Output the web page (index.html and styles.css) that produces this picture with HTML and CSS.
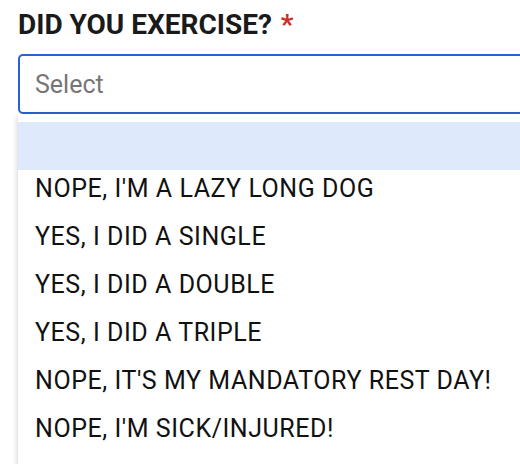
FILE: index.html
```html
<!DOCTYPE html>
<html>
<head>
<meta charset="utf-8">
<link rel="stylesheet" href="styles.css">
</head>
<body>
<div class="field">
  <label class="label">DID YOU EXERCISE? <span class="req">*</span></label>
  <div class="select">
    <div class="input">Select</div>
    <ul class="menu">
      <li class="opt active"></li>
      <li class="opt">NOPE, I'M A LAZY LONG DOG</li>
      <li class="opt">YES, I DID A SINGLE</li>
      <li class="opt">YES, I DID A DOUBLE</li>
      <li class="opt">YES, I DID A TRIPLE</li>
      <li class="opt">NOPE, IT'S MY MANDATORY REST DAY!</li>
      <li class="opt">NOPE, I'M SICK/INJURED!</li>
      <li class="opt"></li>
    </ul>
  </div>
</div>
</body>
</html>
```
FILE: styles.css
```css
html, body {
  margin: 0;
  padding: 0;
  background: #fff;
  overflow: hidden;
  width: 520px;
  height: 464px;
}
body {
  font-family: Roboto, "Liberation Sans", sans-serif;
  color: #111;
}
.field {
  padding: 8px 0 0 18px;
}
.label {
  display: block;
  font-weight: 700;
  font-size: 28px;
  line-height: 34px;
  color: #1a1a1a;
  margin-bottom: 12px;
}
.req {
  color: #c8302c;
  margin-left: 2px;
}
.select {
  width: 540px;
}
.input {
  box-sizing: border-box;
  height: 60px;
  border: 2px solid #2a61d1;
  border-radius: 5px;
  padding: 2px 15px 0;
  font-size: 25px;
  line-height: 54px;
  color: #767676;
}
.menu {
  list-style: none;
  margin: 0;
  padding: 8px 0 0;
  background: #fff;
  box-shadow: 0 2px 6px rgba(0, 0, 0, 0.22);
}
.opt {
  box-sizing: border-box;
  height: 48px;
  line-height: 38px;
  padding: 0 17px;
  font-size: 25px;
  letter-spacing: 0.55px;
  color: #111;
}
.opt.active {
  background: #deeafc;
}
```
